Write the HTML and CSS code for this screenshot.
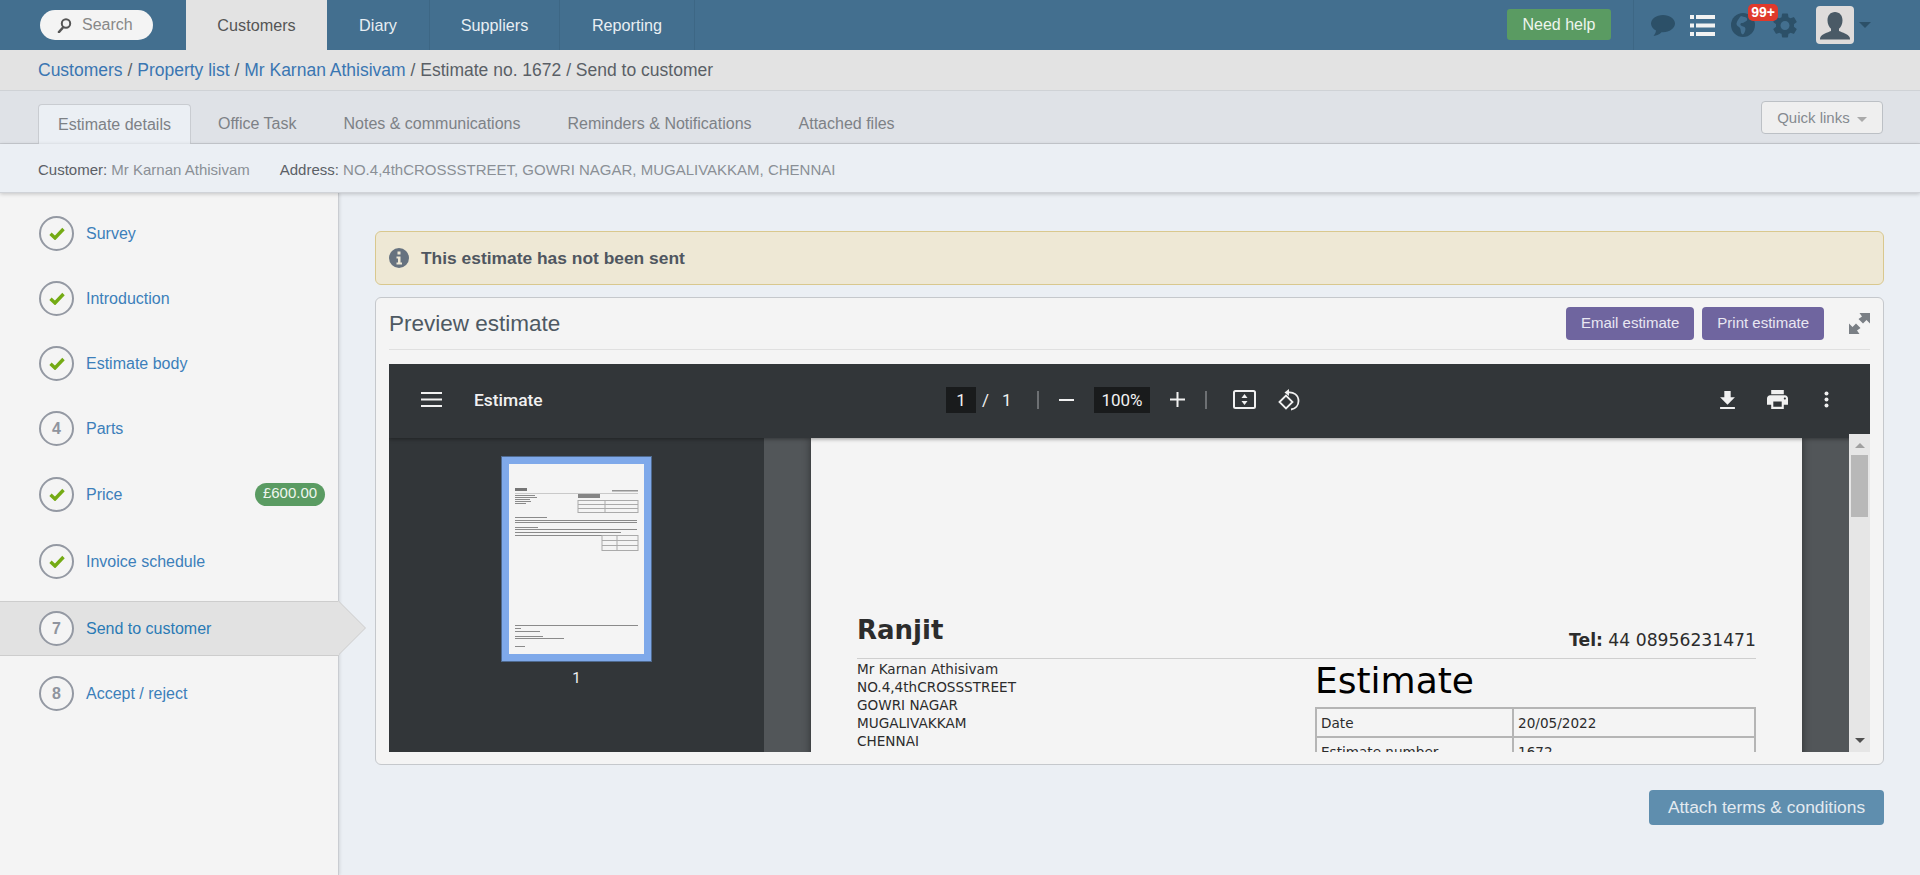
FILE: index.html
```html
<!DOCTYPE html>
<html lang="en">
<head>
    <meta charset="UTF-8" />
    <title>Estimate no. 1672 - Send to customer</title>
    <link rel="stylesheet" href="styles.css">
</head>
<body>

<header class="topbar">
    <div class="search">
        <svg class="search-icon" viewBox="0 0 17 15"><circle cx="11" cy="5.500" r="4.200" fill="none" stroke="#555" stroke-width="2"/><path d="M8 9.500 4 14" stroke="#555" stroke-width="2.600" stroke-linecap="round"/></svg>
        <span>Search</span>
    </div>
    <nav class="main-nav">
        <a href="#" class="nav-customers active">Customers</a>
        <a href="#" class="nav-diary">Diary</a>
        <a href="#" class="nav-suppliers">Suppliers</a>
        <a href="#" class="nav-reporting">Reporting</a>
    </nav>
    <div class="top-right">
        <a href="#" class="help-btn">Need help</a>
        <div class="top-icons">
            <svg class="chat-icon" viewBox="0 0 24 23"><path d="M12 1C5.400 1 0 4.900 0 9.600c0 2.900 2 5.400 5 7-.2 1.900-1 3.700-2.500 5.400 3.300-.4 6-1.800 8-3.800h1.500c6.600 0 12-3.800 12-8.600S18.600 1 12 1z" fill="#2c5068"/></svg>
            <svg class="list-icon" viewBox="0 0 25 23"><path d="M0 1h4v4H0zM6 1h19v4H6zM0 9.500h4v4H0zM6 9.500h19v4H6zM0 18h4v4H0zM6 18h19v4H6z" fill="#f2f2f2"/></svg>
            <div class="globe-wrap">
                <svg class="globe-icon" viewBox="0 0 24 24"><circle cx="12" cy="12" r="12" fill="#2c5068"/><path d="M10 3c2 1 5 .5 6 2.500s-1.500 3-3 4-3-.5-3.500 1.500 2.500 2 4 3 1 3.500 0 5.500-2 2.500-3 1-.5-4-1.500-5.500-3.500-2-3.500-4S8 5 10 3z" fill="#436f8f"/></svg>
                <span class="count-badge">99+</span>
            </div>
            <svg class="gear-icon" viewBox="2.400 2 19.200 20"><path d="M19.140 12.940c.04-.3.06-.61.06-.94 0-.32-.02-.64-.07-.94l2.030-1.580a.49.49 0 0 0 .12-.61l-1.920-3.320a.488.488 0 0 0-.59-.22l-2.390.96c-.5-.38-1.030-.7-1.620-.94l-.36-2.540a.484.484 0 0 0-.48-.41h-3.840c-.24 0-.43.17-.47.41l-.36 2.540c-.59.24-1.130.57-1.620.94l-2.390-.96c-.22-.08-.47 0-.59.22L2.740 8.870c-.12.21-.08.47.12.61l2.030 1.580c-.05.3-.09.63-.09.94s.02.64.07.94l-2.030 1.580a.49.49 0 0 0-.12.61l1.920 3.320c.12.22.37.29.59.22l2.390-.96c.5.38 1.030.7 1.620.94l.36 2.540c.05.24.24.41.48.41h3.840c.24 0 .44-.17.47-.41l.36-2.540c.59-.24 1.130-.56 1.620-.94l2.390.96c.22.08.47 0 .59-.22l1.920-3.320c.12-.22.07-.47-.12-.61l-2.010-1.580zM12 15.600c-1.980 0-3.600-1.620-3.600-3.600s1.620-3.600 3.600-3.600 3.600 1.620 3.600 3.600-1.620 3.600-3.600 3.600z" fill="#2c5068"/></svg>
            <div class="avatar">
                <svg viewBox="0 0 38 38"><path d="M19 6c-4.600 0-7.500 3.500-7.500 8.500 0 3.500 1.500 6.500 3.500 8.200v2.300c-3.500 1.500-9 3-10.500 6-.5 1-.5 2-.5 2.500h30c0-.5 0-1.500-.5-2.500-1.500-3-7-4.500-10.500-6v-2.300c2-1.700 3.500-4.700 3.500-8.200C26.500 9.500 23.600 6 19 6z" fill="#4a5a66"/></svg>
            </div>
            <span class="avatar-caret"></span>
        </div>
    </div>
</header>

<div class="breadcrumb">
    <a href="#">Customers</a> / <a href="#">Property list</a> / <a href="#">Mr Karnan Athisivam</a> / Estimate no. 1672 / Send to customer
</div>

<div class="sub-tabs">
    <a href="#" class="active">Estimate details</a>
    <a href="#">Office Task</a>
    <a href="#">Notes &amp; communications</a>
    <a href="#">Reminders &amp; Notifications</a>
    <a href="#">Attached files</a>
    <button class="quick-links">Quick links <span class="caret"></span></button>
</div>

<div class="info-bar">
    <div><b>Customer:</b> Mr Karnan Athisivam</div>
    <div><b>Address:</b> NO.4,4thCROSSSTREET, GOWRI NAGAR, MUGALIVAKKAM, CHENNAI</div>
</div>

<div class="page-body">
    <aside class="steps">
        <a href="#" class="step"><span class="circle"><svg class="tick" viewBox="0 0 16 13"><path d="M1.500 6.800 6 11 14.500 2" fill="none" stroke="#74ab14" stroke-width="3.400"/></svg></span>Survey</a>
        <a href="#" class="step"><span class="circle"><svg class="tick" viewBox="0 0 16 13"><path d="M1.500 6.800 6 11 14.500 2" fill="none" stroke="#74ab14" stroke-width="3.400"/></svg></span>Introduction</a>
        <a href="#" class="step"><span class="circle"><svg class="tick" viewBox="0 0 16 13"><path d="M1.500 6.800 6 11 14.500 2" fill="none" stroke="#74ab14" stroke-width="3.400"/></svg></span>Estimate body</a>
        <a href="#" class="step"><span class="circle">4</span>Parts</a>
        <a href="#" class="step step-tall"><span class="circle"><svg class="tick" viewBox="0 0 16 13"><path d="M1.500 6.800 6 11 14.500 2" fill="none" stroke="#74ab14" stroke-width="3.400"/></svg></span>Price<span class="price">£600.00</span></a>
        <a href="#" class="step step-tall"><span class="circle"><svg class="tick" viewBox="0 0 16 13"><path d="M1.500 6.800 6 11 14.500 2" fill="none" stroke="#74ab14" stroke-width="3.400"/></svg></span>Invoice schedule</a>
        <a href="#" class="step active"><span class="circle">7</span>Send to customer</a>
        <a href="#" class="step"><span class="circle">8</span>Accept / reject</a>
    </aside>

    <main class="content">
        <div class="alert">
            <svg class="info-icon" viewBox="0 0 20 20"><circle cx="10" cy="10" r="10" fill="#66727f"/><path d="M8.500 3.500h3v3h-3zM7.500 8.500h4v6h1.500v2H7.500v-2H9v-4H7.500z" fill="#eee8d5"/></svg>
            This estimate has not been sent
        </div>

        <section class="panel">
            <div class="panel-head">
                <h2>Preview estimate</h2>
                <a href="#" class="btn-purple">Email estimate</a>
                <a href="#" class="btn-purple">Print estimate</a>
                <svg class="expand-icon" viewBox="0 0 21 21"><path d="M10.500 0H21v10.500l-3.500-3.500-3.500 3.500-4.500-4.500L13 3.500z" fill="#7a7f85"/><path d="M10.500 21H0V10.500L3.500 14 7 10.500l4.500 4.500L8 17.500z" fill="#7a7f85"/></svg>
            </div>

            <div class="pdf">
                <div class="pdf-toolbar">
                    <div class="tb-left">
                        <svg class="tb-menu" viewBox="0 0 21 15"><path d="M0 0h21v2H0zM0 6.500h21v2H0zM0 13h21v2H0z" fill="#f1f1f1"/></svg>
                        <span class="tb-title">Estimate</span>
                    </div>
                    <span class="tb-box tb-page">1</span>
                    <span class="tb-slash">/</span>
                    <span class="tb-total">1</span>
                    <span class="tb-sep"></span>
                    <span class="tb-minus"></span>
                    <span class="tb-box tb-zoom">100%</span>
                    <svg class="tb-plus" viewBox="0 0 15 15"><path d="M6.500 0h2v6.500H15v2H8.500V15h-2V8.500H0v-2h6.500z" fill="#f1f1f1"/></svg>
                    <span class="tb-sep tb-sep2"></span>
                    <svg class="tb-fit" viewBox="0 0 23 19"><rect x="1" y="1" width="21" height="17" rx="1.500" fill="none" stroke="#f1f1f1" stroke-width="2"/><path d="M11.500 4 14.500 8h-6zM11.500 15l3-4h-6z" fill="#f1f1f1"/></svg>
                    <svg class="tb-rotate" viewBox="0 0 22 22"><path d="M1.500 13 8 6.500l6.500 6.500L8 19.500z" fill="none" stroke="#f1f1f1" stroke-width="1.800"/><path d="M9.500 3.500c6-1 11 2.500 11 8.500 0 4.500-3 8-7.500 8.500" fill="none" stroke="#f1f1f1" stroke-width="1.800"/><path d="M11 0v7L6.500 3.500z" fill="#f1f1f1"/></svg>
                    <div class="tb-right">
                        <svg class="tb-download" viewBox="5 3 14 17"><path d="M5 20h14v-2H5v2zM19 9h-4V3H9v6H5l7 7 7-7z" fill="#f1f1f1"/></svg>
                        <svg class="tb-print" viewBox="2 3 20 18"><path d="M19 8H5c-1.660 0-3 1.340-3 3v6h4v4h12v-4h4v-6c0-1.660-1.340-3-3-3zm-3 11H8v-5h8v5zm3-7c-.55 0-1-.45-1-1s.45-1 1-1 1 .45 1 1-.45 1-1 1zm-1-9H6v4h12V3z" fill="#f1f1f1"/></svg>
                        <svg class="tb-dots" viewBox="0 0 5 17"><circle cx="2.500" cy="2.500" r="2" fill="#f1f1f1"/><circle cx="2.500" cy="8.500" r="2" fill="#f1f1f1"/><circle cx="2.500" cy="14.500" r="2" fill="#f1f1f1"/></svg>
                    </div>
                </div>

                <div class="pdf-body">
                    <div class="pdf-side">
                        <div class="thumb">
                            <svg viewBox="0 0 135 190">
                                <rect width="135" height="190" fill="#f4f4f4"/>
                                <g class="thumb-ink">
                                    <g fill="#555">
                                        <rect x="6" y="24" width="12" height="3" opacity=".8"/>
                                        <rect x="103" y="26" width="26" height="1.500" opacity=".6"/>
                                        <rect x="69" y="30" width="22" height="4" opacity=".7"/>
                                    </g>
                                    <g fill="#8a8a8a">
                                        <rect x="6" y="29" width="123" height="1" opacity=".4"/>
                                        <rect x="6" y="31" width="20" height="1"/>
                                        <rect x="6" y="33" width="22" height="1"/>
                                        <rect x="6" y="35" width="15" height="1"/>
                                        <rect x="6" y="37" width="16" height="1"/>
                                        <rect x="6" y="39" width="11" height="1"/>
                                        <rect x="6" y="53" width="32" height="1"/>
                                        <rect x="6" y="56" width="122" height="1"/>
                                        <rect x="6" y="58" width="122" height="1"/>
                                        <rect x="6" y="63" width="23" height="1"/>
                                        <rect x="6" y="65" width="122" height="1"/>
                                        <rect x="6" y="68" width="106" height="1"/>
                                        <rect x="6" y="71" width="123" height="1"/>
                                        <rect x="6" y="161" width="123" height="1"/>
                                        <rect x="6" y="164" width="6" height="1"/>
                                        <rect x="6" y="167" width="25" height="1"/>
                                        <rect x="6" y="172" width="28" height="1"/>
                                        <rect x="6" y="174" width="49" height="1"/>
                                        <rect x="6" y="182" width="10" height="1"/>
                                    </g>
                                    <g fill="none" stroke="#aaa">
                                        <rect x="69" y="36.500" width="60" height="12"/>
                                        <path d="M69 40.500h60M69 44.500h60M96 36.500v12"/>
                                        <rect x="93" y="71.500" width="36" height="15"/>
                                        <path d="M93 76.500h36M93 81.500h36M108 71.500v15"/>
                                    </g>
                                </g>
                            </svg>
                        </div>
                        <div class="thumb-num">1</div>
                    </div>
                    <div class="pdf-view">
                        <div class="pdf-page">
                            <div class="doc-top">
                                <div class="doc-company">Ranjit</div>
                                <div class="doc-tel"><b>Tel:</b> 44 08956231471</div>
                            </div>
                            <div class="doc-cols">
                                <div class="doc-address">
                                    Mr Karnan Athisivam<br>
                                    NO.4,4thCROSSSTREET<br>
                                    GOWRI NAGAR<br>
                                    MUGALIVAKKAM<br>
                                    CHENNAI
                                </div>
                                <div class="doc-right">
                                    <div class="doc-title">Estimate</div>
                                    <table class="doc-table">
                                        <tr><td class="label">Date</td><td>20/05/2022</td></tr>
                                        <tr><td class="label">Estimate number</td><td>1672</td></tr>
                                    </table>
                                </div>
                            </div>
                        </div>
                    </div>
                    <div class="pdf-scroll">
                        <span class="arrow-up"></span>
                        <span class="scroll-thumb"></span>
                        <span class="arrow-down"></span>
                    </div>
                </div>
            </div>
        </section>

        <div class="bottom-actions">
            <a href="#" class="btn-attach">Attach terms &amp; conditions</a>
        </div>
    </main>
</div>

</body>
</html>
```
FILE: styles.css
```css
* {
  margin: 0;
  padding: 0;
  box-sizing: border-box;
}

html, body {
  height: 875px;
  overflow: hidden;
}

body {
  background: #ebeff4;
  color: #555;
  font-family: "Liberation Sans", Arial, sans-serif;
  font-size: 14px;
  display: flex;
  flex-direction: column;
}

a {
  text-decoration: none;
}

/* top bar */
.topbar {
  height: 50px;
  flex: none;
  background: #436f8f;
  display: flex;
}

.search {
  width: 113px;
  height: 30px;
  margin: 10px 33px 0 40px;
  padding-left: 15px;
  background: #f4f4f4;
  border-radius: 15px;
  display: flex;
  align-items: center;
  gap: 10px;
  color: #888;
  font-size: 16px;
}

.search-icon {
  width: 17px;
  height: 15px;
}

.main-nav {
  display: flex;
}

.main-nav a {
  color: #e8eef3;
  font-size: 16.200px;
  line-height: 51px;
  text-align: center;
  border-right: 1px solid #3d6785;
}

.main-nav a.active {
  background: #e3e3e3;
  color: #555;
  border-right: none;
}

.nav-customers { width: 141px; }
.nav-diary { width: 103px; }
.nav-suppliers { width: 130px; }
.nav-reporting { width: 135px; }

.top-right {
  margin-left: auto;
  display: flex;
}

.help-btn {
  width: 104px;
  height: 31px;
  margin: 9px 22px 0 0;
  background: #5a9b62;
  border-radius: 3px;
  color: #eef5ee;
  font-size: 16px;
  line-height: 31px;
  text-align: center;
}

.top-icons {
  width: 287px;
  border-left: 1px solid #3d6785;
  display: flex;
  align-items: center;
  padding-left: 17px;
}

.chat-icon { width: 24px; height: 23px; }
.list-icon { width: 25px; height: 23px; margin-left: 15px; }

.globe-wrap {
  position: relative;
  width: 24px;
  height: 24px;
  margin-left: 16px;
}

.globe-icon { width: 24px; height: 24px; display: block; }

.count-badge {
  position: absolute;
  left: 17px;
  top: -9px;
  width: 30px;
  height: 17px;
  background: #e0392b;
  border-radius: 5px;
  color: #fff;
  font-size: 14px;
  font-weight: bold;
  line-height: 16px;
  text-align: center;
}

.gear-icon { width: 24px; height: 25px; margin-left: 18px; }

.avatar {
  width: 38px;
  height: 38px;
  margin-left: 19px;
  background: #dfdcdb;
  border-radius: 4px;
}

.avatar svg { display: block; }

.avatar-caret {
  margin-left: 5px;
  border-left: 6px solid transparent;
  border-right: 6px solid transparent;
  border-top: 6px solid #2c5068;
}

/* breadcrumb */
.breadcrumb {
  height: 41px;
  flex: none;
  padding-left: 38px;
  background: #e3e3e3;
  border-bottom: 1px solid #cfd2d6;
  font-size: 17.500px;
  line-height: 41px;
  color: #5a5f66;
}

.breadcrumb a {
  color: #3a76b2;
}

/* tabs */
.sub-tabs {
  height: 53px;
  flex: none;
  padding-left: 38px;
  background: #dfe2e7;
  border-bottom: 1px solid #c9ccd1;
  display: flex;
  align-items: flex-end;
  gap: 5px;
}

.sub-tabs a {
  height: 39px;
  padding: 0 21px;
  color: #7d8186;
  font-size: 16px;
  line-height: 39px;
}

.sub-tabs a.active {
  height: 40px;
  margin-bottom: -1px;
  margin-right: 1px;
  padding: 0 19px;
  background: #ebeff4;
  border: 1px solid #c9ccd1;
  border-bottom: none;
  border-radius: 4px 4px 0 0;
}

.quick-links {
  width: 122px;
  height: 33px;
  margin: 0 37px 9px auto;
  background: #efefef;
  border: 1px solid #bcc0c5;
  border-radius: 4px;
  color: #858a90;
  font-family: inherit;
  font-size: 15px;
}

.caret {
  display: inline-block;
  margin-left: 3px;
  vertical-align: middle;
  border-left: 5px solid transparent;
  border-right: 5px solid transparent;
  border-top: 5px solid #aaa;
}

.info-bar {
  height: 49px;
  flex: none;
  padding: 2px 0 0 38px;
  background: #ebeff4;
  border-bottom: 1px solid #d0d3d8;
  box-shadow: 0 1px 4px rgba(0, 0, 0, 0.2);
  display: flex;
  gap: 30px;
  align-items: center;
  color: #8a8f96;
  font-size: 15px;
  position: relative;
}

.info-bar b {
  font-weight: normal;
  color: #5b6066;
}

/* page body */
.page-body {
  flex: 1;
  display: flex;
  min-height: 0;
}

/* steps */
.steps {
  width: 339px;
  flex: none;
  padding-top: 8px;
  background: #f4f4f4;
  border-right: 1px solid #c9ccd1;
  box-shadow: 1px 0 3px rgba(0, 0, 0, 0.1);
}

.step {
  height: 65px;
  padding: 0 13px 0 39px;
  display: flex;
  align-items: center;
  gap: 12px;
  color: #3c7fba;
  font-size: 16px;
  position: relative;
}

.step-tall {
  height: 67px;
}

.step.active {
  height: 55px;
  margin: 6px -1px 5px 0;
  background: #e2e2e2;
  border-top: 1px solid #cdcdcd;
  border-bottom: 1px solid #cdcdcd;
  color: #2a7ab5;
}

.step.active::before,
.step.active::after {
  content: "";
  position: absolute;
  top: -1px;
  border-top: 27.500px solid transparent;
  border-bottom: 27.500px solid transparent;
}

.step.active::before {
  left: 100%;
  border-left: 27px solid #cdcdcd;
}

.step.active::after {
  left: calc(100% - 1px);
  border-left: 27px solid #e2e2e2;
}

.circle {
  width: 35px;
  height: 35px;
  flex: none;
  background: #f4f4f4;
  border: 2px solid #9499a3;
  border-radius: 50%;
  display: flex;
  align-items: center;
  justify-content: center;
  color: #8f949e;
  font-size: 16px;
  font-weight: bold;
}

.tick {
  width: 16px;
  height: 13px;
}

.price {
  margin-left: auto;
  width: 70px;
  height: 23px;
  background: #5a9b62;
  border-radius: 12px;
  color: #eef5ee;
  font-size: 15px;
  line-height: 20px;
  text-align: center;
}

/* content */
.content {
  flex: 1;
  min-width: 0;
  padding: 38px 36px 0 36px;
}

.alert {
  height: 54px;
  padding-left: 13px;
  background: #eee8d5;
  border: 1px solid #d9c88e;
  border-radius: 6px;
  display: flex;
  align-items: center;
  gap: 12px;
  color: #4f5660;
  font-size: 17.400px;
  font-weight: bold;
}

.info-icon {
  width: 20px;
  height: 20px;
}

.panel {
  height: 468px;
  margin-top: 12px;
  padding: 0 13px;
  background: #f4f4f4;
  border: 1px solid #c5c8cc;
  border-radius: 6px;
}

.panel-head {
  height: 52px;
  border-bottom: 1px solid #e0e0e0;
  display: flex;
  align-items: center;
}

.panel-head h2 {
  margin-right: auto;
  color: #4e5963;
  font-size: 22.500px;
  font-weight: normal;
}

.btn-purple {
  height: 33px;
  padding: 0 15px;
  margin-left: 8px;
  background: #6f659f;
  border-radius: 4px;
  color: #e9e7f2;
  font-size: 15px;
  line-height: 31px;
}

.expand-icon {
  width: 21px;
  height: 21px;
  margin-left: 25px;
}

/* pdf viewer */
.pdf {
  height: 388px;
  margin-top: 14px;
  background: #525659;
  display: flex;
  flex-direction: column;
  overflow: hidden;
}

.pdf-toolbar {
  height: 74px;
  flex: none;
  padding-bottom: 3px;
  background: #323639;
  display: flex;
  align-items: center;
  color: #f1f1f1;
  font-family: Roboto, sans-serif;
  box-shadow: 0 1px 4px rgba(0, 0, 0, 0.4);
  position: relative;
  z-index: 1;
}

.tb-left {
  width: 557px;
  flex: none;
  padding-left: 32px;
  display: flex;
  align-items: center;
  gap: 32px;
}

.tb-menu { width: 21px; height: 15px; }

.tb-title {
  font-size: 17.400px;
  font-weight: 500;
}

.tb-box {
  height: 26px;
  background: #191b1c;
  font-size: 17px;
  line-height: 26px;
  text-align: center;
}

.tb-page { width: 30px; }
.tb-zoom { width: 56px; margin-left: 20px; }

.tb-slash {
  width: 6px;
  margin-left: 6px;
  font-size: 17px;
}

.tb-total {
  width: 8px;
  margin-left: 14px;
  font-size: 17px;
}

.tb-sep {
  width: 2px;
  height: 18px;
  margin-left: 27px;
  background: #6d7073;
}

.tb-minus {
  width: 15px;
  height: 2px;
  margin-left: 20px;
  background: #f1f1f1;
}

.tb-plus { width: 15px; height: 15px; margin-left: 20px; }
.tb-sep2 { margin-left: 20px; }
.tb-fit { width: 23px; height: 19px; margin-left: 26px; }
.tb-rotate { width: 22px; height: 22px; margin-left: 22px; }

.tb-right {
  margin-left: auto;
  padding-right: 41px;
  display: flex;
  align-items: center;
}

.tb-download { width: 15px; height: 18px; }
.tb-print { width: 21px; height: 19px; margin-left: 32px; }
.tb-dots { width: 5px; height: 17px; margin-left: 36px; }

.pdf-body {
  flex: 1;
  min-height: 0;
  display: flex;
}

.pdf-side {
  width: 375px;
  flex: none;
  padding-top: 18px;
  background: #323639;
}

.thumb {
  width: 151px;
  height: 206px;
  margin-left: 112px;
  padding: 7px;
  background: #7fa9ea;
  border: 1px solid #4f6a8f;
}

.thumb svg {
  display: block;
  width: 135px;
  height: 190px;
}

.thumb-ink {
  filter: blur(0.4px);
}

.thumb-num {
  margin-top: 7px;
  text-align: center;
  color: #f1f1f1;
  font-family: Roboto, sans-serif;
  font-size: 15px;
}

.pdf-view {
  flex: 1;
  min-width: 0;
  padding: 0 47px;
}

.pdf-page {
  height: 400px;
  padding: 0 46px;
  background: #f4f4f4;
  box-shadow: 0 0 8px rgba(0, 0, 0, 0.45);
  color: #2c2c2c;
  font-family: "DejaVu Sans", sans-serif;
}

.doc-top {
  height: 221px;
  border-bottom: 1px solid #cfcfcf;
  display: flex;
  justify-content: space-between;
  align-items: flex-end;
}

.doc-company {
  padding-bottom: 13px;
  font-size: 26px;
  font-weight: bold;
}

.doc-tel {
  padding-bottom: 8px;
  font-size: 17.200px;
}

.doc-cols {
  display: flex;
}

.doc-address {
  width: 458px;
  padding-top: 1px;
  flex: none;
  font-size: 13.600px;
  line-height: 18px;
}

.doc-right {
  flex: 1;
  min-width: 0;
}

.doc-title {
  height: 48px;
  color: #000;
  font-size: 36px;
  line-height: 44px;
}

.doc-table {
  width: 100%;
  border-collapse: collapse;
  font-size: 13.600px;
}

.doc-table td {
  height: 29px;
  padding: 0 4px;
  border: 2px solid #b5b5b5;
}

.doc-table .label {
  width: 197px;
}

.pdf-scroll {
  width: 21px;
  flex: none;
  margin-top: -4px;
  background: #e6e6e6;
  position: relative;
  z-index: 2;
  display: flex;
  flex-direction: column;
  align-items: center;
}

.scroll-thumb {
  width: 17px;
  height: 62px;
  margin-top: 7px;
  background: #b8b8b8;
}

.arrow-up {
  margin-top: 9px;
  border-left: 5px solid transparent;
  border-right: 5px solid transparent;
  border-bottom: 5px solid #a0a0a0;
}

.arrow-down {
  margin-top: auto;
  margin-bottom: 9px;
  border-left: 5px solid transparent;
  border-right: 5px solid transparent;
  border-top: 5px solid #505050;
}

/* bottom */
.bottom-actions {
  margin-top: 25px;
  display: flex;
  justify-content: flex-end;
}

.btn-attach {
  width: 235px;
  height: 35px;
  background: #5f8eae;
  border-radius: 4px;
  color: #e3eaf0;
  font-size: 17.400px;
  line-height: 34px;
  text-align: center;
}
```
